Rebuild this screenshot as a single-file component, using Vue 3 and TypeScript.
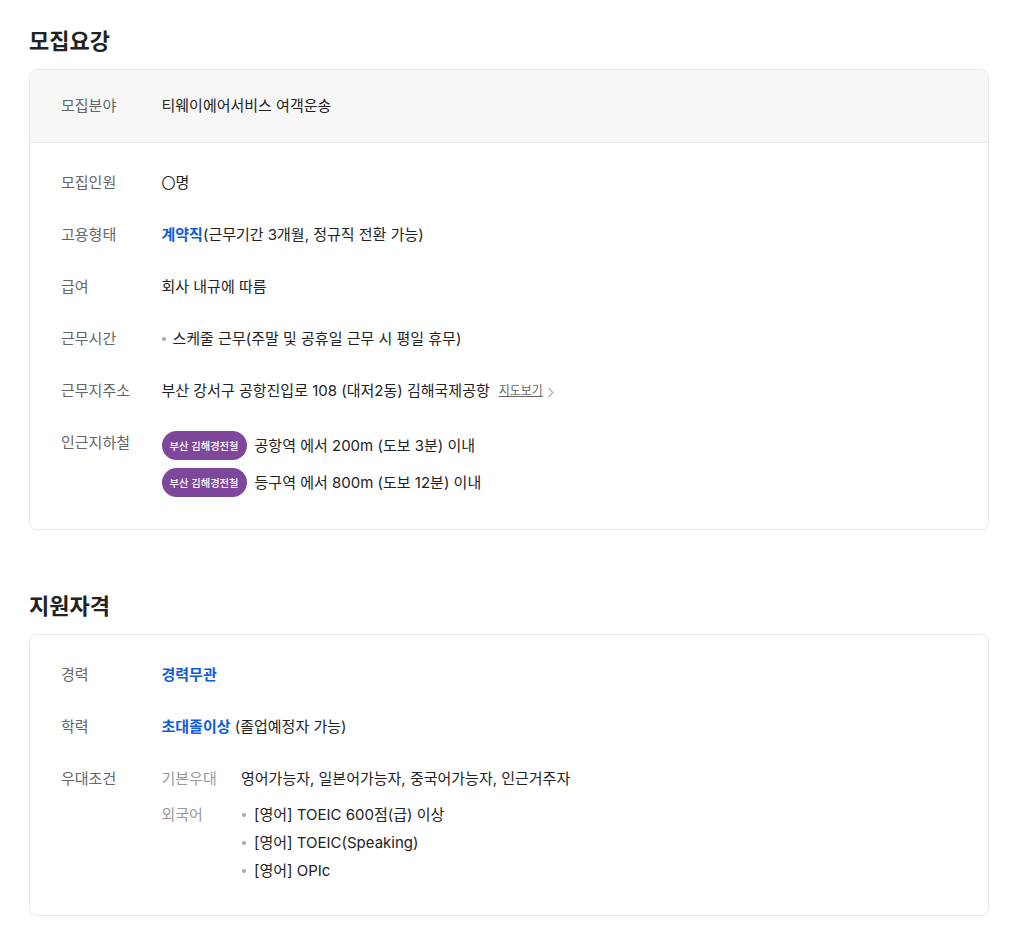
<script setup lang="ts">
interface Row { label: string; value: string }
const langs: string[] = ['[영어] TOEIC 600점(급) 이상', '[영어] TOEIC(Speaking)', '[영어] OPIc']
const subways: Row[] = [
  { label: '부산 김해경전철', value: '공항역 에서 200m (도보 3분) 이내' },
  { label: '부산 김해경전철', value: '등구역 에서 800m (도보 12분) 이내' },
]
</script>

<template>
  <main class="page">
    <section class="section">
      <h2 class="title">모집요강</h2>
      <div class="card">
        <div class="head row">
          <div class="label">모집분야</div>
          <div class="value">티웨이에어서비스 여객운송</div>
        </div>
        <div class="body">
          <div class="row">
            <div class="label">모집인원</div>
            <div class="value"><span class="circle">〇</span>명</div>
          </div>
          <div class="row">
            <div class="label">고용형태</div>
            <div class="value"><strong class="em">계약직</strong>(근무기간 3개월, 정규직 전환 가능)</div>
          </div>
          <div class="row">
            <div class="label">급여</div>
            <div class="value">회사 내규에 따름</div>
          </div>
          <div class="row">
            <div class="label">근무시간</div>
            <div class="value bullet">스케줄 근무(주말 및 공휴일 근무 시 평일 휴무)</div>
          </div>
          <div class="row">
            <div class="label">근무지주소</div>
            <div class="value addr">
              <span>부산 강서구 공항진입로 108 (대저2동) 김해국제공항</span>
              <a class="map">지도보기</a>
              <svg class="chev" width="7" height="11" viewBox="0 0 7 11" fill="none">
                <path d="M1.5 1l4.5 4.5-4.5 4.5" stroke="#777" stroke-width="1" />
              </svg>
            </div>
          </div>
          <div class="row last">
            <div class="label sub-label">인근지하철</div>
            <div class="subs">
              <div v-for="s in subways" :key="s.value" class="sub">
                <span class="badge">{{ s.label }}</span>
                <span class="value">{{ s.value }}</span>
              </div>
            </div>
          </div>
        </div>
      </div>
    </section>

    <section class="section second">
      <h2 class="title">지원자격</h2>
      <div class="card">
        <div class="body qual">
          <div class="row">
            <div class="label">경력</div>
            <div class="value"><strong class="em">경력무관</strong></div>
          </div>
          <div class="row">
            <div class="label">학력</div>
            <div class="value"><strong class="em">초대졸이상</strong> (졸업예정자 가능)</div>
          </div>
          <div class="row last">
            <div class="label">우대조건</div>
            <div class="prefs">
              <div class="pref">
                <div class="plabel">기본우대</div>
                <div class="value">영어가능자, 일본어가능자, 중국어가능자, 인근거주자</div>
              </div>
              <div class="pref lang">
                <div class="plabel">외국어</div>
                <ul class="list">
                  <li v-for="l in langs" :key="l" class="value bullet">{{ l }}</li>
                </ul>
              </div>
            </div>
          </div>
        </div>
      </div>
    </section>
  </main>
</template>

<style scoped>
.page {
  box-sizing: border-box;
  width: 1019px;
  padding: 24px 30px 25px 29px;
  font-family: Inter, "Noto Sans CJK KR", "Liberation Sans", sans-serif;
  color: #222;
}
.second { margin-top: 59px; }
.title {
  margin: 0 0 11px;
  font-size: 22px;
  line-height: 34px;
  font-weight: 700;
  color: #222;
}
.card {
  border: 1px solid #e8e8e8;
  border-radius: 8px;
  overflow: hidden;
  background: #fff;
}
.head {
  background: #f7f7f7;
  border-bottom: 1px solid #e8e8e8;
  padding: 24px 31px 24px;
}
.body { padding: 28px 31px 32px; }
.qual { padding-top: 28px; padding-bottom: 32px; }
.row { display: flex; align-items: flex-start; }
.body .row { margin-bottom: 28px; }
.body .row.last { margin-bottom: 0; }
.label {
  flex: 0 0 100.5px;
  font-size: 15px;
  line-height: 24px;
  color: #666;
}
.value {
  font-size: 15px;
  line-height: 24px;
  color: #222;
}
.circle { font-size: 14px; }
.em { color: #0f5bdc; font-weight: 700; }
.bullet { position: relative; padding-left: 11px; }
.bullet::before {
  content: "";
  position: absolute;
  left: 0;
  top: 10px;
  width: 4px;
  height: 4px;
  border-radius: 50%;
  background: #aaa;
}
.list .bullet { padding-left: 13px; }
.list .bullet::before { left: 1px; }
.addr { display: flex; align-items: center; }
.map {
  margin-left: 9px;
  font-size: 12px;
  color: #666;
  text-decoration: underline;
}
.chev { margin-left: 4px; margin-top: 2px; }
.sub-label { margin-top: 0; }
.subs { display: flex; flex-direction: column; gap: 8px; margin-top: 0; }
.sub { display: flex; align-items: center; gap: 8px; }
.badge {
  display: flex;
  align-items: center;
  height: 29px;
  padding: 0 8px;
  border-radius: 15px;
  background: #7f479c;
  color: #fff;
  font-size: 10.3px;
  font-weight: 500;
  white-space: nowrap;
}
.prefs { display: flex; flex-direction: column; gap: 12px; }
.pref { display: flex; align-items: flex-start; }
.plabel {
  flex: 0 0 79.5px;
  font-size: 15px;
  line-height: 24px;
  color: #999;
}
.list { margin: 0; padding: 0; list-style: none; display: flex; flex-direction: column; gap: 4px; }
</style>
